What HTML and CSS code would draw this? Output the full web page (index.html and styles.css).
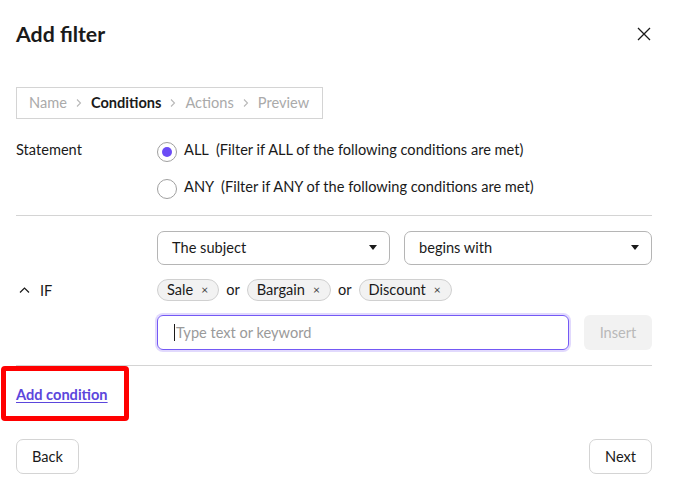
FILE: index.html
```html
<!DOCTYPE html>
<html lang="en">
<head>
<meta charset="utf-8">
<title>Add filter</title>
<link rel="stylesheet" href="styles.css">
</head>
<body>
<div class="dialog">
  <header class="header">
    <h1 class="title">Add filter</h1>
    <button class="close" aria-label="Close">
      <svg width="14" height="14" viewBox="0 0 14 14"><path d="M1 1L13 13M13 1L1 13" stroke="#1a1a1a" stroke-width="1.3" fill="none"/></svg>
    </button>
  </header>

  <nav class="crumbs">
    <span class="crumb">Name</span>
    <svg class="sep" width="6" height="10" viewBox="0 0 6 10"><path d="M1 1.5L4.5 5L1 8.5" stroke="#b8b8b8" stroke-width="1.1" fill="none"/></svg>
    <span class="crumb active">Conditions</span>
    <svg class="sep" width="6" height="10" viewBox="0 0 6 10"><path d="M1 1.5L4.5 5L1 8.5" stroke="#b8b8b8" stroke-width="1.1" fill="none"/></svg>
    <span class="crumb">Actions</span>
    <svg class="sep" width="6" height="10" viewBox="0 0 6 10"><path d="M1 1.5L4.5 5L1 8.5" stroke="#b8b8b8" stroke-width="1.1" fill="none"/></svg>
    <span class="crumb">Preview</span>
  </nav>

  <section class="statement">
    <div class="label">Statement</div>
    <div class="options">
      <label class="option"><span class="radio checked"></span><span class="opt-text">ALL&nbsp; (Filter if ALL of the following conditions are met)</span></label>
      <label class="option"><span class="radio"></span><span class="opt-text">ANY&nbsp; (Filter if ANY of the following conditions are met)</span></label>
    </div>
  </section>

  <section class="condition">
    <div class="if-label">
      <svg width="12" height="8" viewBox="0 0 12 8"><path d="M1 6.5L5.5 2L10 6.5" stroke="#1a1a1a" stroke-width="1.2" fill="none"/></svg>
      <span>IF</span>
    </div>
    <div class="cond-body">
      <div class="selects">
        <div class="select"><span>The subject</span><span class="caret"></span></div>
        <div class="select"><span>begins with</span><span class="caret"></span></div>
      </div>
      <div class="chips">
        <span class="chip">Sale<span class="x">×</span></span>
        <span class="or">or</span>
        <span class="chip">Bargain<span class="x">×</span></span>
        <span class="or">or</span>
        <span class="chip">Discount<span class="x">×</span></span>
      </div>
      <div class="input-row">
        <div class="input"><span class="cursor"></span><span class="placeholder">Type text or keyword</span></div>
        <button class="insert">Insert</button>
      </div>
    </div>
  </section>

  <div class="add-wrap">
    <a class="add-link" href="#">Add condition</a>
    <div class="highlight"></div>
  </div>

  <footer class="footer">
    <button class="btn">Back</button>
    <button class="btn">Next</button>
  </footer>
</div>
</body>
</html>
```

FILE: styles.css
```css
* { box-sizing: border-box; }
html, body { margin: 0; padding: 0; background: #fff; }
body {
  font-family: Lato, "Noto Sans", sans-serif;
  font-size: 14.6px;
  color: #1a1a1a;
}
.dialog {
  width: 677px;
  height: 488px;
  padding: 0 25px 0 16px;
}
.header {
  display: flex;
  justify-content: space-between;
  align-items: center;
  padding-top: 22px;
  height: 46px;
}
.title {
  margin: 0;
  font-size: 21.3px;
  line-height: 24px;
  font-weight: 700;
}
.close {
  border: 0;
  background: none;
  padding: 0;
  width: 14px;
  height: 14px;
  margin-right: 1px;
  display: flex;
}
.crumbs {
  margin-top: 41px;
  width: 307px;
  height: 32px;
  border: 1px solid #d4d4d4;
  display: flex;
  align-items: center;
  gap: 9px;
  padding-left: 12px;
}
.crumb { color: #aaaaaa; line-height: 18px; }
.crumb.active { color: #1a1a1a; font-weight: 700; }
.sep { display: block; }

.statement {
  display: grid;
  grid-template-columns: 141px 1fr;
  margin-top: 15px;
  padding-bottom: 8px;
  border-bottom: 1px solid #d4d4d4;
}
.label { line-height: 32px; height: 36px; }
.options { display: flex; flex-direction: column; }
.option {
  display: flex;
  align-items: center;
  height: 36px;
  gap: 7px;
}
.option + .option { height: 37px; padding-top: 1px; }
.radio {
  width: 20px;
  height: 20px;
  border-radius: 50%;
  border: 1px solid #a0a0a0;
  display: flex;
  align-items: center;
  justify-content: center;
  background: #fff;
}
.radio.checked::after {
  content: "";
  width: 10px;
  height: 10px;
  border-radius: 50%;
  background: #6b4cf6;
}
.opt-text { line-height: 18px; padding-bottom: 4px; }

.condition {
  display: grid;
  grid-template-columns: 141px 1fr;
  padding: 15px 0 15px;
  border-bottom: 1px solid #d4d4d4;
}
.if-label {
  align-self: center;
  display: flex;
  align-items: center;
  gap: 9px;
  padding-left: 3px;
  padding-bottom: 1px;
}
.cond-body {
  display: flex;
  flex-direction: column;
  gap: 14px;
}
.selects {
  display: grid;
  grid-template-columns: 233px 1fr;
  gap: 14px;
}
.select {
  height: 34px;
  border: 1px solid #b5b5b5;
  border-radius: 7px;
  display: flex;
  align-items: center;
  justify-content: space-between;
  padding: 0 12px 2px 14px;
}
.caret {
  width: 0;
  height: 0;
  border-left: 4px solid transparent;
  border-right: 4px solid transparent;
  border-top: 5px solid #1a1a1a;
}
.chips {
  display: flex;
  align-items: center;
  gap: 7px;
  height: 22px;
}
.chip {
  height: 22px;
  border: 1px solid #d0d0d0;
  background: #f2f2f2;
  border-radius: 11px;
  display: inline-flex;
  align-items: center;
  padding: 0 10px 1px 9px;
  gap: 8px;
}
.chip .x { font-size: 12px; color: #444; }
.or { line-height: 22px; padding-bottom: 1px; }
.input-row {
  display: flex;
  gap: 15px;
  height: 35px;
}
.input {
  width: 412px;
  height: 35px;
  border: 1px solid #7459f5;
  border-radius: 6px;
  box-shadow: 0 0 0 2px #e1d9fd;
  display: flex;
  align-items: center;
  padding-left: 16px;
}
.cursor {
  width: 1px;
  height: 17px;
  background: #1a1a1a;
  margin-right: 1px;
}
.placeholder { color: #9a9a9a; }
.insert {
  flex: 1;
  border: 0;
  background: #f2f2f2;
  border-radius: 6px;
  color: #b9b9b9;
  font: inherit;
}
.add-wrap {
  position: relative;
  padding-top: 20px;
  height: 38px;
}
.add-link {
  color: #5b46dc;
  font-weight: 700;
  line-height: 18px;
  text-decoration: underline;
  text-underline-offset: 2px;
}
.highlight {
  position: absolute;
  left: -15px;
  top: 0;
  width: 128px;
  height: 55px;
  border: 5px solid #ff0000;
  border-radius: 4px;
}
.footer {
  margin-top: 35px;
  display: flex;
  justify-content: space-between;
}
.btn {
  height: 35px;
  padding: 0 15px;
  border: 1px solid #d4d4d4;
  border-radius: 7px;
  background: #fff;
  font: inherit;
  color: #1a1a1a;
}
```
